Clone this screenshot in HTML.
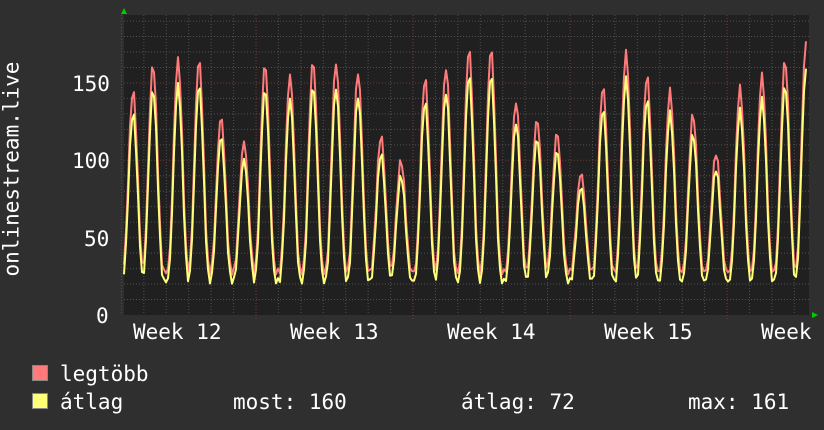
<!DOCTYPE html><html><head><meta charset="utf-8"><style>
body{margin:0;background:#2f2f2f;width:824px;height:430px;overflow:hidden;position:relative;font-family:"DejaVu Sans Mono","Liberation Mono",monospace;color:#fff}
.t{position:absolute;font-size:21px;line-height:1;white-space:pre}
</style></head><body>
<svg id="g" width="824" height="430" style="position:absolute;left:0;top:0"></svg>
<div class="t" style="left:72px;top:74px">150</div>
<div class="t" style="left:72px;top:151px">100</div>
<div class="t" style="left:84px;top:229px">50</div>
<div class="t" style="left:96px;top:306px">0</div>
<div class="t" style="left:-78px;top:176px;transform:rotate(-90deg);width:180px;text-align:center">onlinestream.live</div>
<div class="t" style="left:133px;top:322px">Week 12</div>
<div class="t" style="left:290px;top:322px">Week 13</div>
<div class="t" style="left:447px;top:322px">Week 14</div>
<div class="t" style="left:604px;top:322px">Week 15</div>
<div class="t" style="left:761px;top:322px">Week</div>
<div style="position:absolute;left:32px;top:365px;width:14px;height:14px;background:#ff7a7a;border:1px solid #888"></div>
<div style="position:absolute;left:32px;top:393px;width:14px;height:14px;background:#ffff7a;border:1px solid #888"></div>
<div class="t" style="left:60px;top:364px">legtöbb</div>
<div class="t" style="left:60px;top:392px">átlag</div>
<div class="t" style="left:233px;top:392px">most: 160</div>
<div class="t" style="left:461px;top:392px">átlag: 72</div>
<div class="t" style="left:688px;top:392px">max: 161</div>
<script>
var s='',X0=124,X1=809,Y0=15,Y1=315,k=1.547;
function y(v){return 315-v*k}
s+='<rect x="'+X0+'" y="'+Y0+'" width="'+(X1-X0)+'" height="'+(Y1-Y0)+'" fill="#202020"/>';
for(var v=10;v<=190;v+=10){var yy=y(v);s+='<line x1="'+X0+'" x2="'+X1+'" y1="'+yy+'" y2="'+yy+'" stroke="'+(v%50==0?'#6a3a3a':'#505050')+'" stroke-dasharray="1,2"/>';}
for(var x=256-22.43*6;x<X1;x+=22.43){var wk=Math.abs(((x-256)/157)-Math.round((x-256)/157))<0.01;
s+='<line x1="'+x+'" x2="'+x+'" y1="'+Y0+'" y2="'+(wk?320:Y1)+'" stroke="'+(wk?'#7a3a3a':'#505050')+'" stroke-dasharray="1,2"/>';}
var P=[[133,145],[153,162],[178,165],[199,165],[221,128],[244,112],[265,162],[290,155],[313,164],[336,163],[358,157],[381,116],[401,100],[425,153],[446,160],[469,172],[491,172],[516,138],[537,127],[557,118],[581,92],[603,148],[626,170],[647,155],[670,145],[693,130],[716,105],[740,147],[762,155],[785,165],[806,176]];
function val(x,f,b){var best=b;for(var i=0;i<P.length;i++){var d=(x-P[i][0])/11.2;if(Math.abs(d)<1){var c=Math.pow((1+Math.cos(Math.PI*d))/2,1.3);var v=b+(P[i][1]*f-b)*c;if(v>best)best=v;}}
return best+Math.sin(x*1.7)*2*f}
function line(f,b,col){var p=[];for(var x=X0;x<=X1-2;x+=2)p.push(x+','+y(val(x,f,b)).toFixed(1));
return '<polyline points="'+p.join(' ')+'" fill="none" stroke="'+col+'" stroke-width="2" stroke-linejoin="round"/>'}
s+=line(1,28,'#ff7a7a');s+=line(0.9,22,'#ffff7a');
s+='<polygon points="121,14 127,14 124,8" fill="#00cc00"/><polygon points="812,312 812,318 818,315" fill="#00cc00"/>';
document.getElementById('g').innerHTML=s;
</script>
</body></html>
